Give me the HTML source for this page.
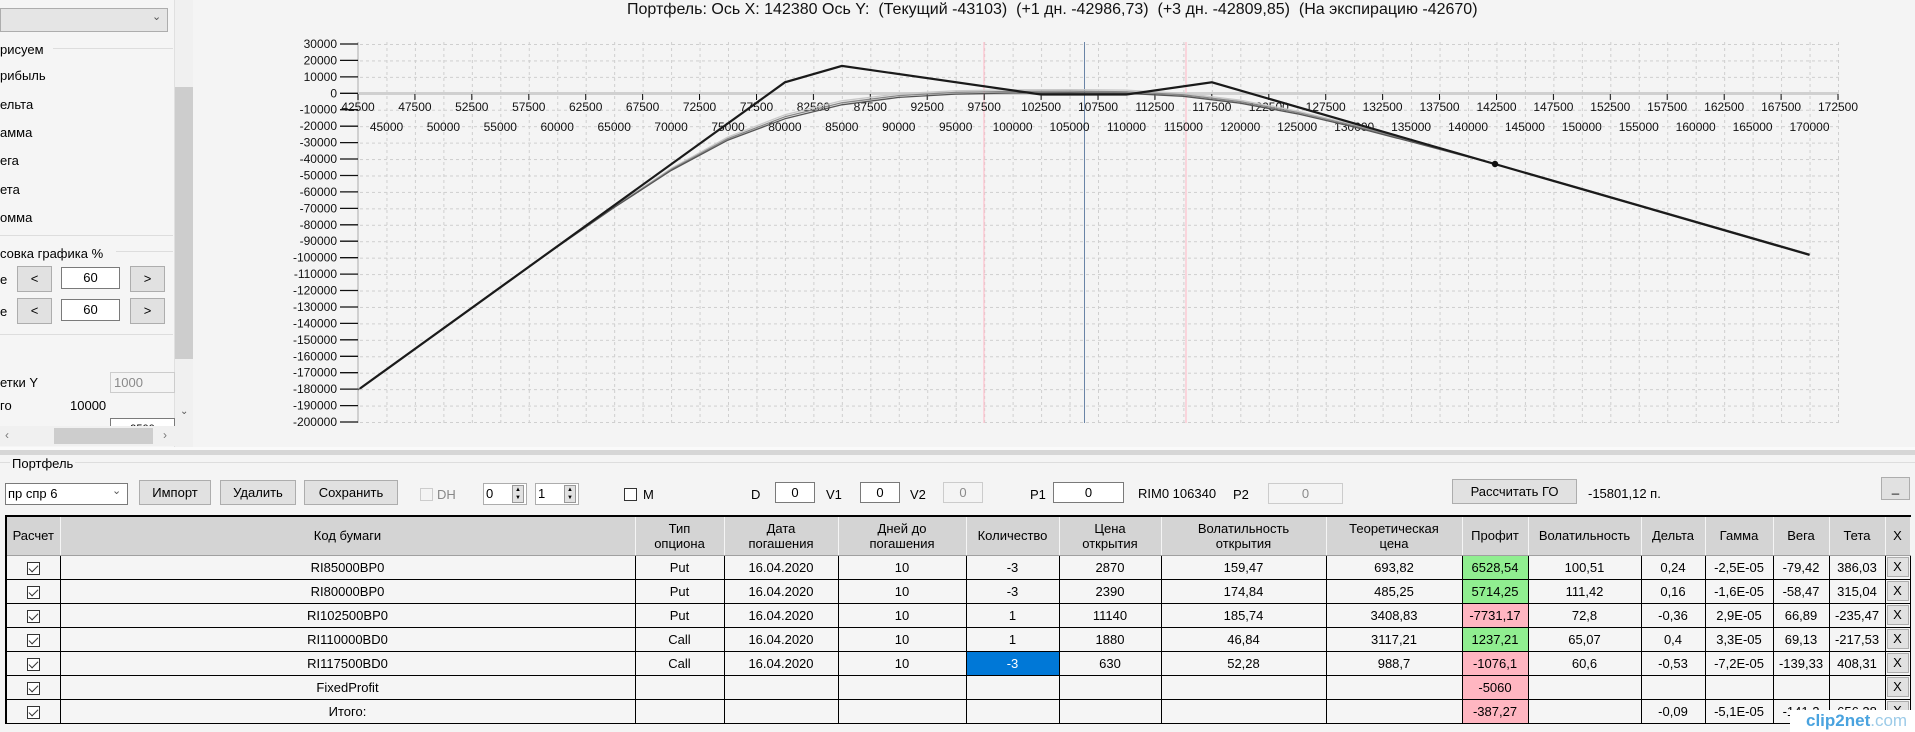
<!DOCTYPE html>
<html><head><meta charset="utf-8">
<style>
*{box-sizing:border-box;margin:0;padding:0}
body{width:1915px;height:732px;overflow:hidden;background:#f4f4f4;font-family:"Liberation Sans","DejaVu Sans",sans-serif;font-size:13px;color:#000;position:relative}
.a{position:absolute;white-space:nowrap}
.btn{position:absolute;background:#e1e1e1;border:1px solid #adadad;text-align:center;font-size:13px}
.tb{position:absolute;background:#fff;border:1px solid #7a7a7a;text-align:center;font-size:13px}
.tbd{position:absolute;background:#f4f4f4;border:1px solid #ccc;color:#8a8a8a;text-align:center;font-size:13px}
table{position:absolute;left:5px;top:515px;border-collapse:collapse;table-layout:fixed;border-top:2px solid #000;border-left:2px solid #000}
td,th{border:1px solid #000;text-align:center;font-size:13px;font-weight:normal;overflow:hidden;white-space:nowrap;background:#f5f5f5;height:24px;padding:0 2px}
th{background:#d4d4d4;height:39px;border-color:#f5f5f5 #f5f5f5 #a0a0a0 #f5f5f5;line-height:15px}
.g{background:#90ee90}.p{background:#ffb6c1}.s{background:#0078d7;color:#fff}
.cb{display:inline-block;width:13px;height:13px;border:1px solid #333;background:#fff;position:relative;vertical-align:middle}
.cb:after{content:"";position:absolute;left:3px;top:0px;width:4px;height:8px;border:solid #333;border-width:0 1px 1px 0;transform:rotate(45deg)}
.xb{display:block;background:#e1e1e1;border:1px solid #adadad;height:20px;line-height:18px;margin:0 -1px}
</style></head><body>

<!-- left panel -->
<div class="a" style="left:0;top:0;width:175px;height:447px;background:#f5f5f5;border-right:1px solid #e0e0e0"></div>
<div class="a" style="left:0;top:8px;width:168px;height:24px;background:#e5e5e5;border:1px solid #adadad"></div>
<div class="a" style="left:152px;top:10px;font-size:11px;color:#555">&#8964;</div>
<div class="a" style="left:53px;top:48px;width:120px;border-top:1px solid #ddd"></div>
<div class="a" style="left:0;top:42px;font-size:13px">рисуем</div>
<div class="a" style="left:0;top:68px">рибыль</div>
<div class="a" style="left:0;top:97px">ельта</div>
<div class="a" style="left:0;top:125px">амма</div>
<div class="a" style="left:0;top:153px">ега</div>
<div class="a" style="left:0;top:182px">ета</div>
<div class="a" style="left:0;top:210px">омма</div>
<div class="a" style="left:0;top:235px;width:173px;border-top:1px solid #ddd"></div>
<div class="a" style="left:116px;top:251px;width:57px;border-top:1px solid #ddd"></div>
<div class="a" style="left:0;top:246px">совка графика %</div>
<div class="a" style="left:0;top:272px">е</div>
<div class="btn" style="left:17px;top:266px;width:35px;height:26px;line-height:24px">&lt;</div>
<div class="tb" style="left:61px;top:267px;width:59px;height:22px;line-height:20px">60</div>
<div class="btn" style="left:130px;top:266px;width:35px;height:26px;line-height:24px">&gt;</div>
<div class="a" style="left:0;top:304px">е</div>
<div class="btn" style="left:17px;top:298px;width:35px;height:26px;line-height:24px">&lt;</div>
<div class="tb" style="left:61px;top:299px;width:59px;height:22px;line-height:20px">60</div>
<div class="btn" style="left:130px;top:298px;width:35px;height:26px;line-height:24px">&gt;</div>
<div class="a" style="left:0;top:334px;width:173px;border-top:1px solid #ddd"></div>
<div class="a" style="left:175px;top:0;width:18px;height:447px;background:#f0f0f0"></div>
<div class="a" style="left:175px;top:87px;width:18px;height:272px;background:#cdcdcd"></div>
<div class="a" style="left:0;top:375px">етки Y</div>
<div class="tbd" style="left:110px;top:372px;width:65px;height:21px;line-height:19px;text-align:left;padding-left:3px">1000</div>
<div class="a" style="left:0;top:398px">го</div>
<div class="a" style="left:70px;top:398px">10000</div>
<div class="tb" style="left:110px;top:418px;width:65px;height:12px;border-bottom:none;overflow:hidden;font-size:11px;line-height:20px">9500</div>
<div class="a" style="left:180px;top:406px;font-size:10px;color:#555">&#8964;</div>
<div class="a" style="left:0;top:426px;width:175px;height:20px;background:#f0f0f0"></div>
<div class="a" style="left:54px;top:428px;width:99px;height:16px;background:#cdcdcd"></div>
<div class="a" style="left:5px;top:428px;color:#777;font-size:12px">&lsaquo;</div>
<div class="a" style="left:163px;top:428px;color:#777;font-size:12px">&rsaquo;</div>

<!-- title -->
<div class="a" style="left:627px;top:1px;font-size:16px;color:#111">Портфель: Ось X: 142380 Ось Y:&nbsp; (Текущий -43103)&nbsp; (+1 дн. -42986,73)&nbsp; (+3 дн. -42809,85)&nbsp; (На экспирацию -42670)</div>

<!-- chart -->
<svg class="a" style="left:0;top:0" width="1915" height="450" xmlns="http://www.w3.org/2000/svg">
<defs>
<pattern id="gv" x="358" y="0" width="28.4615" height="6" patternUnits="userSpaceOnUse"><line x1="0.5" y1="0" x2="0.5" y2="3" stroke="#cfcfcf" stroke-width="1"/></pattern>
<pattern id="gh" x="0" y="44" width="6" height="16.435" patternUnits="userSpaceOnUse"><line x1="0" y1="0.5" x2="3" y2="0.5" stroke="#cfcfcf" stroke-width="1"/></pattern>
</defs>
<rect x="358" y="42" width="1481" height="381" fill="url(#gv)"/>
<rect x="358" y="42" width="1481" height="381" fill="url(#gh)"/>
<line x1="358" y1="93.5" x2="1838" y2="93.5" stroke="#d0d0d0" stroke-width="3"/>
<line x1="358" y1="42" x2="358" y2="423" stroke="#d0d0d0" stroke-width="2"/>
<line x1="984" y1="42" x2="984" y2="423" stroke="#ffc0cb" stroke-width="1.2"/>
<line x1="1186" y1="42" x2="1186" y2="423" stroke="#ffc0cb" stroke-width="1.2"/>
<line x1="1084.5" y1="42" x2="1084.5" y2="423" stroke="#6a84a6" stroke-width="1"/>
<g stroke="#111" stroke-width="1.3">
<path d="M340 44H358M340 60.4H358M340 76.9H358M340 93.3H358M340 109.7H358M340 126.2H358M340 142.6H358M340 159H358M340 175.5H358M340 191.9H358M340 208.4H358M340 224.8H358M340 241.2H358M340 257.7H358M340 274.1H358M340 290.5H358M340 307H358M340 323.4H358M340 339.8H358M340 356.3H358M340 372.7H358M340 389.1H358M340 405.6H358M340 422H358"/>
</g>
<g stroke="#111" stroke-width="1">
<path d="M358 94v6M414.9 94v6M471.8 94v6M528.8 94v6M585.7 94v6M642.6 94v6M699.5 94v6M756.5 94v6M813.4 94v6M870.3 94v6M927.2 94v6M984.2 94v6M1041.1 94v6M1098 94v6M1154.9 94v6M1211.8 94v6M1268.8 94v6M1325.7 94v6M1382.6 94v6M1439.5 94v6M1496.5 94v6M1553.4 94v6M1610.3 94v6M1667.2 94v6M1724.2 94v6M1781.1 94v6M1838 94v6"/>
</g>
<g font-family="Liberation Sans, sans-serif" font-size="12" fill="#111" text-anchor="end">
<text x="337" y="48">30000</text><text x="337" y="64.4">20000</text><text x="337" y="80.9">10000</text><text x="337" y="97.3">0</text><text x="337" y="113.7">-10000</text><text x="337" y="130.2">-20000</text><text x="337" y="146.6">-30000</text><text x="337" y="163">-40000</text><text x="337" y="179.5">-50000</text><text x="337" y="195.9">-60000</text><text x="337" y="212.4">-70000</text><text x="337" y="228.8">-80000</text><text x="337" y="245.2">-90000</text><text x="337" y="261.7">-100000</text><text x="337" y="278.1">-110000</text><text x="337" y="294.5">-120000</text><text x="337" y="311">-130000</text><text x="337" y="327.4">-140000</text><text x="337" y="343.8">-150000</text><text x="337" y="360.3">-160000</text><text x="337" y="376.7">-170000</text><text x="337" y="393.1">-180000</text><text x="337" y="409.6">-190000</text><text x="337" y="426">-200000</text>
</g>
<g font-family="Liberation Sans, sans-serif" font-size="12" fill="#111" text-anchor="middle">
<text x="358" y="111">42500</text><text x="414.9" y="111">47500</text><text x="471.8" y="111">52500</text><text x="528.8" y="111">57500</text><text x="585.7" y="111">62500</text><text x="642.6" y="111">67500</text><text x="699.5" y="111">72500</text><text x="756.5" y="111">77500</text><text x="813.4" y="111">82500</text><text x="870.3" y="111">87500</text><text x="927.2" y="111">92500</text><text x="984.2" y="111">97500</text><text x="1041.1" y="111">102500</text><text x="1098" y="111">107500</text><text x="1154.9" y="111">112500</text><text x="1211.8" y="111">117500</text><text x="1268.8" y="111">122500</text><text x="1325.7" y="111">127500</text><text x="1382.6" y="111">132500</text><text x="1439.5" y="111">137500</text><text x="1496.5" y="111">142500</text><text x="1553.4" y="111">147500</text><text x="1610.3" y="111">152500</text><text x="1667.2" y="111">157500</text><text x="1724.2" y="111">162500</text><text x="1781.1" y="111">167500</text><text x="1838" y="111">172500</text>
<text x="386.5" y="131">45000</text><text x="443.4" y="131">50000</text><text x="500.3" y="131">55000</text><text x="557.2" y="131">60000</text><text x="614.2" y="131">65000</text><text x="671.1" y="131">70000</text><text x="728" y="131">75000</text><text x="784.9" y="131">80000</text><text x="841.8" y="131">85000</text><text x="898.8" y="131">90000</text><text x="955.7" y="131">95000</text><text x="1012.6" y="131">100000</text><text x="1069.5" y="131">105000</text><text x="1126.5" y="131">110000</text><text x="1183.4" y="131">115000</text><text x="1240.3" y="131">120000</text><text x="1297.2" y="131">125000</text><text x="1354.2" y="131">130000</text><text x="1411.1" y="131">135000</text><text x="1468" y="131">140000</text><text x="1524.9" y="131">145000</text><text x="1581.8" y="131">150000</text><text x="1638.8" y="131">155000</text><text x="1695.7" y="131">160000</text><text x="1752.6" y="131">165000</text><text x="1809.5" y="131">170000</text>
</g>
<g fill="none" stroke-width="1.3" stroke-linejoin="round">
<polyline stroke="#c8c8c8" points="358,389.6 443.4,328 500.3,286.8 557.2,246.4 614.2,206.5 671.1,168.5 728,137 784.9,114.8 841.8,100.8 898.8,93.8 955.7,90.8 1012.6,89.8 1069.5,89.6 1126.5,90.2 1183.4,93.3 1240.3,100.2 1297.2,111 1354.2,124.6 1411.1,139.8 1495.1,163.6 1581.8,188.4 1809.5,254.2"/>
<polyline stroke="#888" points="358,389.7 443.4,328.2 500.3,287 557.2,246.7 614.2,207 671.1,169.5 728,138.6 784.9,116.8 841.8,102.8 898.8,95.6 955.7,92.4 1012.6,91.4 1069.5,91.2 1126.5,91.8 1183.4,94.8 1240.3,101.7 1297.2,112.4 1354.2,125.8 1411.1,140.8 1495.1,163.9 1581.8,188.5 1809.5,254.2"/>
<polyline stroke="#555" points="358,389.8 443.4,328.3 500.3,287.2 557.2,247 614.2,207.5 671.1,170.5 728,140.1 784.9,118.8 841.8,104.8 898.8,97.4 955.7,94.1 1012.6,93 1069.5,92.8 1126.5,93.3 1183.4,96.3 1240.3,103.2 1297.2,113.8 1354.2,127 1411.1,141.8 1495.1,164.1 1581.8,188.6 1809.5,254.2"/>
</g>
<polyline fill="none" stroke="#1a1a1a" stroke-width="2.2" points="360,388.5 784.9,82.3 841.9,65.9 1041.1,94.5 1126.5,94.5 1211.9,82.3 1809.6,254.9"/>
<circle cx="1495" cy="164" r="3.2" fill="#111"/>
</svg>

<!-- splitter -->
<div class="a" style="left:0;top:447px;width:1915px;height:3px;background:#fafafa"></div>
<div class="a" style="left:0;top:450px;width:1915px;height:5px;background:#d6d6d6"></div>
<div class="a" style="left:0;top:462px;width:1915px;border-top:1px solid #ddd"></div>
<div class="a" style="left:10px;top:456px;padding:0 2px;background:#f4f4f4">Портфель</div>

<!-- toolbar -->
<div class="a" style="left:5px;top:483px;width:123px;height:22px;background:#fff;border:1px solid #7a7a7a;padding-left:2px;line-height:20px">пр спр 6</div>
<div class="a" style="left:112px;top:484px;font-size:11px;color:#555">&#8964;</div>
<div class="btn" style="left:139px;top:480px;width:72px;height:25px;line-height:23px">Импорт</div>
<div class="btn" style="left:220px;top:480px;width:76px;height:25px;line-height:23px">Удалить</div>
<div class="btn" style="left:304px;top:480px;width:94px;height:25px;line-height:23px">Сохранить</div>
<div class="a" style="left:420px;top:488px;width:13px;height:13px;border:1px solid #ccc;background:#f4f4f4"></div>
<div class="a" style="left:437px;top:487px;color:#888">DH</div>
<div class="a" style="left:483px;top:483px;width:44px;height:22px;background:#fff;border:1px solid #adadad;padding-left:2px;line-height:20px">0</div>
<div class="a" style="left:512px;top:485px;width:12px;height:18px;background:#e1e1e1;border:1px solid #999;font-size:6px;line-height:8px;text-align:center">▲<br>▼</div>
<div class="a" style="left:535px;top:483px;width:44px;height:22px;background:#fff;border:1px solid #adadad;padding-left:2px;line-height:20px">1</div>
<div class="a" style="left:564px;top:485px;width:12px;height:18px;background:#e1e1e1;border:1px solid #999;font-size:6px;line-height:8px;text-align:center">▲<br>▼</div>
<div class="a" style="left:624px;top:488px;width:13px;height:13px;border:1px solid #333;background:#fff"></div>
<div class="a" style="left:643px;top:487px">M</div>
<div class="a" style="left:751px;top:487px">D</div>
<div class="tb" style="left:775px;top:482px;width:40px;height:21px;line-height:19px">0</div>
<div class="a" style="left:826px;top:487px">V1</div>
<div class="tb" style="left:860px;top:482px;width:40px;height:21px;line-height:19px">0</div>
<div class="a" style="left:910px;top:487px">V2</div>
<div class="tbd" style="left:943px;top:482px;width:40px;height:21px;line-height:19px">0</div>
<div class="a" style="left:1030px;top:487px">P1</div>
<div class="tb" style="left:1053px;top:482px;width:71px;height:21px;line-height:19px">0</div>
<div class="a" style="left:1138px;top:486px">RIM0 106340</div>
<div class="a" style="left:1233px;top:487px">P2</div>
<div class="tbd" style="left:1268px;top:483px;width:75px;height:21px;line-height:19px">0</div>
<div class="btn" style="left:1452px;top:479px;width:125px;height:25px;line-height:23px">Рассчитать ГО</div>
<div class="a" style="left:1588px;top:486px">-15801,12 п.</div>
<div class="btn" style="left:1881px;top:477px;width:29px;height:23px;line-height:20px">_</div>

<table>
<colgroup><col style="width:54px"><col style="width:575px"><col style="width:89px"><col style="width:114px"><col style="width:128px"><col style="width:93px"><col style="width:102px"><col style="width:165px"><col style="width:136px"><col style="width:66px"><col style="width:113px"><col style="width:64px"><col style="width:68px"><col style="width:56px"><col style="width:56px"><col style="width:25px"></colgroup>
<tr><th>Расчет</th><th>Код бумаги</th><th>Тип<br>опциона</th><th>Дата<br>погашения</th><th>Дней до<br>погашения</th><th>Количество</th><th>Цена<br>открытия</th><th>Волатильность<br>открытия</th><th>Теоретическая<br>цена</th><th>Профит</th><th>Волатильность</th><th>Дельта</th><th>Гамма</th><th>Вега</th><th>Тета</th><th>X</th></tr>
<tr><td><span class="cb"></span></td><td>RI85000BP0</td><td>Put</td><td>16.04.2020</td><td>10</td><td>-3</td><td>2870</td><td>159,47</td><td>693,82</td><td class="g">6528,54</td><td>100,51</td><td>0,24</td><td>-2,5E-05</td><td>-79,42</td><td>386,03</td><td><span class="xb">X</span></td></tr>
<tr><td><span class="cb"></span></td><td>RI80000BP0</td><td>Put</td><td>16.04.2020</td><td>10</td><td>-3</td><td>2390</td><td>174,84</td><td>485,25</td><td class="g">5714,25</td><td>111,42</td><td>0,16</td><td>-1,6E-05</td><td>-58,47</td><td>315,04</td><td><span class="xb">X</span></td></tr>
<tr><td><span class="cb"></span></td><td>RI102500BP0</td><td>Put</td><td>16.04.2020</td><td>10</td><td>1</td><td>11140</td><td>185,74</td><td>3408,83</td><td class="p">-7731,17</td><td>72,8</td><td>-0,36</td><td>2,9E-05</td><td>66,89</td><td>-235,47</td><td><span class="xb">X</span></td></tr>
<tr><td><span class="cb"></span></td><td>RI110000BD0</td><td>Call</td><td>16.04.2020</td><td>10</td><td>1</td><td>1880</td><td>46,84</td><td>3117,21</td><td class="g">1237,21</td><td>65,07</td><td>0,4</td><td>3,3E-05</td><td>69,13</td><td>-217,53</td><td><span class="xb">X</span></td></tr>
<tr><td><span class="cb"></span></td><td>RI117500BD0</td><td>Call</td><td>16.04.2020</td><td>10</td><td class="s">-3</td><td>630</td><td>52,28</td><td>988,7</td><td class="p">-1076,1</td><td>60,6</td><td>-0,53</td><td>-7,2E-05</td><td>-139,33</td><td>408,31</td><td><span class="xb">X</span></td></tr>
<tr><td><span class="cb"></span></td><td>FixedProfit</td><td></td><td></td><td></td><td></td><td></td><td></td><td></td><td class="p">-5060</td><td></td><td></td><td></td><td></td><td></td><td><span class="xb">X</span></td></tr>
<tr><td><span class="cb"></span></td><td>Итого:</td><td></td><td></td><td></td><td></td><td></td><td></td><td></td><td class="p">-387,27</td><td></td><td>-0,09</td><td>-5,1E-05</td><td>-141,2</td><td>656,38</td><td><span class="xb">X</span></td></tr>
</table>

<div class="a" style="left:1790px;top:710px;width:125px;height:22px;background:#fff"></div>
<div class="a" style="left:1806px;top:711px;font-size:17px;font-weight:bold;color:#4aa3df">clip2net<span style="color:#9ccbe8;font-weight:normal">.com</span></div>
</body></html>
